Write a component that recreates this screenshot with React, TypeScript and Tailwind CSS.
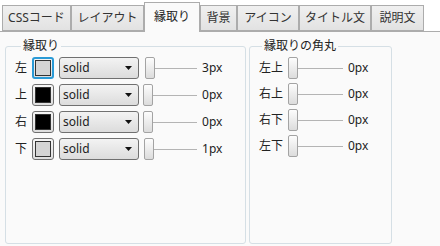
const tabs = [
  { label: "CSSコード", w: "w-[69px]" },
  { label: "レイアウト", w: "w-[73px]" },
  { label: "縁取り", w: "w-[56px]", active: true },
  { label: "背景", w: "w-[37px]" },
  { label: "アイコン", w: "w-[62px]" },
  { label: "タイトル文", w: "w-[72px]" },
  { label: "説明文", w: "w-[53px]" },
];

const borders = [
  { side: "左", swatch: "bg-[#d4d4d4]", focus: true, value: 3, offset: "ml-[2px]" },
  { side: "上", swatch: "bg-black", value: 0, offset: "ml-0" },
  { side: "右", swatch: "bg-black", value: 0, offset: "ml-0" },
  { side: "下", swatch: "bg-[#d4d4d4]", value: 1, offset: "ml-[1px]" },
];

const corners = ["左上", "右上", "右下", "左下"];

function Slider({ offset, track }: { offset: string; track: string }) {
  return (
    <div className={`flex items-center h-[22px] ${track}`}>
      <div className={`${offset} w-[10px] h-[22px] shrink-0 rounded-[2px] border border-[#a3a3a3] bg-gradient-to-b from-[#fdfdfd] to-[#dcdcdc]`} />
      <div className="flex-1 h-px bg-[#b4b4b4]" />
    </div>
  );
}

export default function App() {
  return (
    <div
      className="w-[440px] h-[246px] bg-white flex flex-col text-[12px] text-[#222]"
      style={{ fontFamily: '"Noto Sans", "Noto Sans CJK JP", sans-serif' }}
    >
      {/* tab strip */}
      <div className="flex items-end h-[31px] pl-[2px] relative z-10">
        {tabs.map((t) =>
          t.active ? (
            <div
              key={t.label}
              className={`${t.w} h-[30px] -mb-px flex items-center justify-center border border-b-0 border-[#acacac] bg-[#fafafa] leading-none pb-[2px]`}
            >
              {t.label}
            </div>
          ) : (
            <div
              key={t.label}
              className={`${t.w} h-[26px] flex items-center justify-center border border-[#acacac] bg-gradient-to-b from-[#f0f0f0] to-[#e2e2e2] leading-none text-[#333]`}
            >
              {t.label}
            </div>
          )
        )}
      </div>

      {/* page body */}
      <div className="flex-1 border-t border-[#acacac] bg-[#fafafa] flex gap-[3px] pl-[5px] pt-[6px] pb-[2px]">
        <fieldset className="w-[241px] border border-[#d5dfe5] rounded-[3px] pl-[9px]">
          <legend className="ml-[6px] px-[2px] leading-[16px] text-[#222]">縁取り</legend>
          <div className="flex flex-col gap-[5px] pt-[3px]">
            {borders.map((b) => (
              <div key={b.side} className="flex items-center h-[22px]">
                <span className="w-[12px] leading-none">{b.side}</span>
                <div
                  className={`ml-[5px] w-[22px] h-[22px] rounded-[3px] flex items-center justify-center ${
                    b.focus ? "border-2 border-[#2a9ad6]" : "border border-[#707070]"
                  } bg-gradient-to-b from-[#f6f6f6] to-[#dedede]`}
                >
                  <div className={`w-[16px] h-[16px] border border-[#333] ${b.swatch}`} />
                </div>
                <div className="ml-[5px] w-[80px] h-[22px] rounded-[3px] border border-[#707070] bg-gradient-to-b from-[#f3f3f3] to-[#dcdcdc] flex items-center justify-between pl-[3px] pr-[6px]">
                  <span className="leading-none">solid</span>
                  <svg width="7" height="4" viewBox="0 0 7 4">
                    <path d="M0 0h7L3.5 4z" fill="#111" />
                  </svg>
                </div>
                <Slider offset={b.offset} track="ml-[4px] w-[54px]" />
                <span className="ml-[5px] leading-none">{b.value}px</span>
              </div>
            ))}
          </div>
        </fieldset>

        <fieldset className="w-[143px] border border-[#d5dfe5] rounded-[3px] pl-[9px]">
          <legend className="ml-[3px] px-[2px] leading-[16px] text-[#222]">縁取りの角丸</legend>
          <div className="flex flex-col gap-[4px] pt-[3px]">
            {corners.map((c) => (
              <div key={c} className="flex items-center h-[22px]">
                <span className="w-[24px] leading-none">{c}</span>
                <Slider offset="ml-0" track="ml-[5px] w-[55px]" />
                <span className="ml-[5px] leading-none">0px</span>
              </div>
            ))}
          </div>
        </fieldset>
      </div>
    </div>
  );
}
